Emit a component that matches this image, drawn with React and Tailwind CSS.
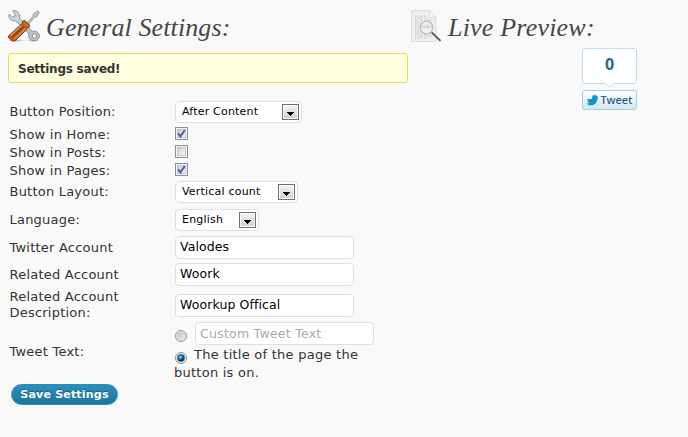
const label = "w-[165px] shrink-0 pl-[1.5px] text-[13px] leading-4 tracking-[0.22px] text-[#333]";

function Row({ height, text, children }) {
  return (
    <div className={`flex items-center ${height}`}>
      <div className={label}>{text}</div>
      {children}
    </div>
  );
}

function Select({ width, children }) {
  return (
    <div className={`ml-[2px] flex h-[22px] items-center justify-between rounded-[4px] border border-[#dfdfdf] bg-white pr-[2px] pl-[6px] ${width}`}>
      <span className="pt-px text-[11px] tracking-[0.2px] whitespace-nowrap text-black">{children}</span>
      <span className="flex h-4 w-[17px] items-center justify-center border border-[#707070] bg-linear-to-b from-[#f4f4f4] to-[#cfcfcf] shadow-[inset_0_0_0_1px_#fafafa]">
        <svg width="7" height="4" viewBox="0 0 7 4" className="mt-[3px]" shapeRendering="crispEdges">
          <path d="M0 0h7v1h-1v1h-1v1h-1v1h-1v-1h-1v-1h-1v-1h-1z" fill="#000" />
        </svg>
      </span>
    </div>
  );
}

function Check({ checked }) {
  return (
    <svg width="13" height="13" viewBox="0 0 13 13" className="mb-[3px] ml-[2px]">
      <defs>
        <linearGradient id="box" x1="0" y1="0" x2="1" y2="1">
          <stop offset="0" stopColor="#c5cad1" />
          <stop offset="1" stopColor="#f8f8f8" />
        </linearGradient>
      </defs>
      <rect x=".5" y=".5" width="12" height="12" fill="#f4f4f4" stroke="#8e8f8f" />
      <rect x="2.5" y="2.5" width="8" height="8" fill="url(#box)" stroke="#c3c7ce" />
      {checked && <path d="M3.2 6.2 5.4 9.5 9.8 3" fill="none" stroke="#4a5f9f" strokeWidth="2" />}
    </svg>
  );
}

function Radio({ checked }) {
  return (
    <svg width="12" height="12" viewBox="0 0 12 12" className="shrink-0">
      <defs>
        <radialGradient id="dot" cx=".4" cy=".35" r=".6">
          <stop offset="0" stopColor="#8fe0ff" />
          <stop offset=".45" stopColor="#1c87bd" />
          <stop offset="1" stopColor="#0b2c4b" />
        </radialGradient>
        <linearGradient id="well" x1="0" y1="0" x2="1" y2="1">
          <stop offset="0" stopColor="#b9bcc1" />
          <stop offset="1" stopColor="#f5f5f5" />
        </linearGradient>
      </defs>
      <circle cx="6" cy="6" r="5.5" fill="#f4f4f4" stroke="#8e8f8f" />
      <circle cx="6" cy="6" r="3.9" fill="url(#well)" stroke="#c5c8cc" strokeWidth=".6" />
      {checked && <circle cx="6" cy="6" r="3.4" fill="url(#dot)" stroke="#173850" strokeWidth=".6" />}
    </svg>
  );
}

function Field({ children, muted }) {
  return (
    <div className={`flex h-[23px] w-[179px] shrink-0 items-center rounded-[4px] border border-[#dfdfdf] bg-white pl-[4px] text-[12.5px] ${muted ? "tracking-[0.25px] text-[#aaa]" : "ml-[2px] tracking-[0.1px] text-black"}`}>
      {children}
    </div>
  );
}

function ToolsIcon() {
  return (
    <svg width="32" height="32" viewBox="0 0 32 32">
      <defs>
        <linearGradient id="steel" x1="0" y1="0" x2="1" y2="1">
          <stop offset="0" stopColor="#d3dada" />
          <stop offset="1" stopColor="#b4bebf" />
        </linearGradient>
        <radialGradient id="floor">
          <stop offset="0" stopColor="#000" stopOpacity=".3" />
          <stop offset="1" stopColor="#000" stopOpacity="0" />
        </radialGradient>
      </defs>
      <ellipse cx="9" cy="30.5" rx="9" ry="1.5" fill="url(#floor)" />
      <ellipse cx="25" cy="30.5" rx="7" ry="1.5" fill="url(#floor)" />
      <path
        d="M4.600.8 7 3.600 6.800 6.300 4.400 7.200 1 4.300C.2 8.200 3 11.600 7.800 10.900L20.800 23.500C20.200 28 22.500 30.800 26.200 30.700 30 30.600 31.800 28 31.300 25.200 30.800 22 27.500 20.600 24.200 21.300L11.700 8.300C12.500 3.500 8.500-.3 4.600.8Z"
        fill="url(#steel)" stroke="#7f8b8d" strokeWidth=".9"
      />
      <circle cx="26.400" cy="26" r="2.200" fill="#f3f5f5" stroke="#7e898a" strokeWidth=".9" />
      <path d="M18.800 13.400 25 6.300 25.200 4.300 29.500.9 31.200 2.600 28.500 6.800 26.600 7.300 20.200 14.600Z" fill="url(#steel)" stroke="#7c8788" strokeWidth=".8" />
      <path d="M14.300 13.600 14.700 11.300 16.500 10.300 21.800 15.300 21 17.400 18.800 17.900 18.700 19.500 6.800 31C4.500 32-.3 28.500.6 25.800L13 14.500Z" fill="#b9591c" stroke="#7c370f" strokeWidth=".9" />
      <path d="M2.400 25.700 13.600 15.400M6.300 29.200 17.400 18.500" stroke="#df9257" strokeWidth="1.400" />
      <path d="M4 27.400 15.400 16.800" stroke="#84390f" strokeWidth="1.200" />
      <path d="m15.600 12.400 4.400 4.300" stroke="#d27c3c" strokeWidth="1.500" />
    </svg>
  );
}

function PreviewIcon() {
  return (
    <svg width="32" height="32" viewBox="0 0 32 32">
      <defs>
        <linearGradient id="lens" x1="0" y1="0" x2="0" y2="1">
          <stop offset="0" stopColor="#fbfbfb" />
          <stop offset=".5" stopColor="#d8d8d8" />
          <stop offset=".55" stopColor="#eee" />
          <stop offset="1" stopColor="#f7f7f7" />
        </linearGradient>
      </defs>
      <path d="M.5.5h17.500l7 7v24H.5z" fill="#efefef" stroke="#dcdcdc" />
      <path d="M18 .5c1 3 .5 5-.5 7.500 3-1 5-1 7.500-.5z" fill="#fafafa" stroke="#d3d3d3" strokeWidth=".8" />
      <g fill="none" stroke="#d6d6d6" strokeWidth="1.300">
        <path d="M4 6h11M4 10h17M4 14h17M4 18h17M4 22h17M4 26h17" strokeDasharray="2 1 1 1 3 1" />
        <path d="M4 8h12M4 12h17M4 16h17M4 20h17M4 24h17M4 28h12" strokeDasharray="1 1 3 1 1 2" />
      </g>
      <circle cx="15.500" cy="17.500" r="6.300" fill="url(#lens)" stroke="#bdbdbd" strokeWidth="1.200" />
      <path d="m20 22 9.500 9" stroke="#b0b0b0" strokeWidth="2.400" />
      <path d="m20.800 22.500 8.700 8.200" stroke="#4b4b4b" strokeWidth="1.300" />
    </svg>
  );
}

function TweetButton() {
  return (
    <div className="ml-[171px] flex w-[55px] flex-col">
      <div className="relative flex h-9 items-center justify-center rounded-[3px] border border-[#bbdcf1] bg-white pb-[4px] font-['Open_Sans',sans-serif] text-[16px] font-bold text-[#216a8d]">
        0
        <svg width="9" height="6" viewBox="0 0 9 6" className="absolute top-[33px] left-[22px]">
          <path d="M0 0v1l4.500 4L9 1V0z" fill="#fff" />
          <path d="m.5 1.500 4 3.500 4-3.500" fill="none" stroke="#bbdcf1" />
        </svg>
      </div>
      <div className="mt-[6px] flex h-5 items-center rounded-[3px] border border-[#a6cde1] bg-linear-to-b from-white to-[#d5e8f2] pl-[3px]">
        <svg width="13" height="12" viewBox="0 0 13 12" className="shrink-0">
          <path d="M.3 9.500C2 9.600 3 9.300 3.600 8.800 2.300 8.600 1.700 7.900 1.400 7L2.600 7C1.600 6.300 1.400 5.500 1.400 4.500 3 5.300 4.600 5.300 6 4.800 5.800 2.800 6.800 1.300 8.400.5L8.300 1.700 10.300.5 10 1.900 11.800 2 11.200 3.600 12.700 4.100 11.200 5.300C11.300 8.700 8.500 11.300 5 11.300 3 11.300 1.300 10.600.3 9.500Z" fill="#0897cf" />
        </svg>
        <span className="ml-[1.5px] font-['Open_Sans',sans-serif] text-[11px] leading-4 font-semibold tracking-[-0.1px] text-[#246782]">Tweet</span>
      </div>
    </div>
  );
}

const heading = "h-8 pt-[2px] font-['Liberation_Serif',serif] text-[26px] leading-8 italic whitespace-nowrap text-[#464646]";

export default function App() {
  return (
    <div className="flex h-[437px] w-[688px] overflow-hidden bg-[#f9f9f9] pt-[10px] pl-2 font-['DejaVu_Sans',sans-serif] text-[#333]">
      <section className="w-[403px] shrink-0">
        <header className="flex h-8 items-center gap-[6px]">
          <ToolsIcon />
          <h2 className={`${heading} tracking-[0.1px]`}>General Settings:</h2>
        </header>
        <div className="mt-[11px] flex h-[30px] w-[400px] items-center rounded-[3px] border border-[#e6db55] bg-[#ffffe0] pt-px pl-[9px] text-[12px] font-bold tracking-[-0.25px]">
          Settings saved!
        </div>
        <form className="mt-[15px]">
          <Row height="h-[28px]" text="Button Position:"><Select width="w-[127px]">After Content</Select></Row>
          <Row height="h-[18px]" text="Show in Home:"><Check checked /></Row>
          <Row height="h-[18px]" text="Show in Posts:"><Check /></Row>
          <Row height="h-[18px]" text="Show in Pages:"><Check checked /></Row>
          <Row height="h-[24px]" text="Button Layout:"><Select width="w-[123px]">Vertical count</Select></Row>
          <Row height="h-[32px]" text="Language:"><Select width="w-[84px]">English</Select></Row>
          <Row height="h-[23px]" text="Twitter Account"><Field>Valodes</Field></Row>
          <Row height="h-[31px]" text="Related Account"><Field>Woork</Field></Row>
          <Row height="h-[30px]" text={<>Related Account<br />Description:</>}><Field>Woorkup Offical</Field></Row>
          <Row height="h-[64px]" text="Tweet Text:">
            <div className="text-[13px] leading-[18px] tracking-[0.25px] whitespace-nowrap">
              <div className="ml-[2px] flex items-end gap-[8px]">
                <div className="pb-[3px]"><Radio /></div>
                <Field muted>Custom Tweet Text</Field>
              </div>
              <div className="ml-[2px] flex items-center gap-[7px] pt-px">
                <div className="pt-[5px]"><Radio checked /></div>
                <span>The title of the page the</span>
              </div>
              <div className="ml-px">button is on.</div>
            </div>
          </Row>
          <button type="button" className="ml-[3px] flex h-[21px] w-[107px] items-center justify-center rounded-full border border-[#298cba] bg-linear-to-b from-[#2a8fbd] to-[#21759b] pt-px text-[11px] font-bold tracking-[0.2px] whitespace-nowrap text-white [text-shadow:0_-1px_0_rgba(0,0,0,0.3)]">
            Save Settings
          </button>
        </form>
      </section>
      <section>
        <header className="flex h-8 items-center gap-[5px]">
          <PreviewIcon />
          <h2 className={`${heading} tracking-[0.2px]`}>Live Preview:</h2>
        </header>
        <div className="mt-[6px]"><TweetButton /></div>
      </section>
    </div>
  );
}
